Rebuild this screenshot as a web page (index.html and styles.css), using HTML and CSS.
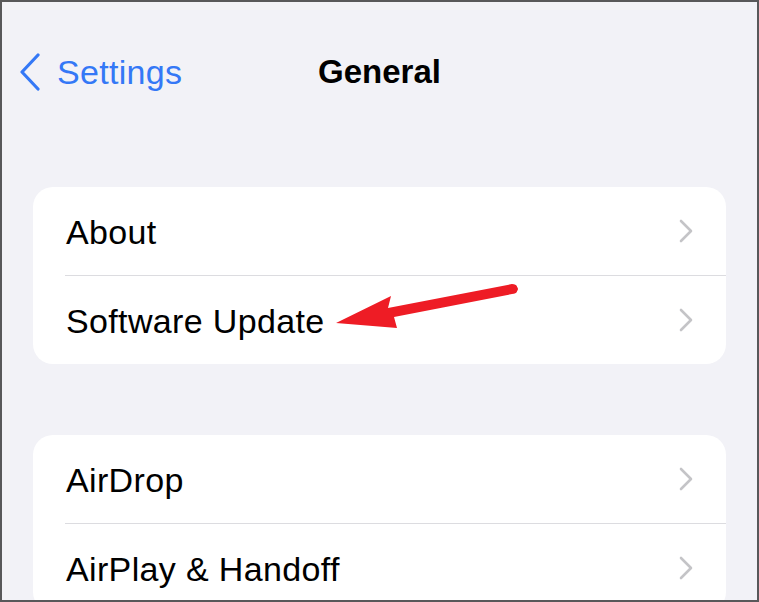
FILE: index.html
```html
<!DOCTYPE html>
<html>
<head>
<meta charset="utf-8">
<title>General</title>
<link rel="stylesheet" href="styles.css">
</head>
<body>
<div class="nav">
	<a class="back" href="#">
		<svg class="backIcon" width="22" height="38" viewBox="0 0 22 38"><polyline points="19,2 3,19 19,36" fill="none" stroke="#3478f6" stroke-width="3.2" stroke-linecap="round" stroke-linejoin="round"/></svg>
		<span>Settings</span>
	</a>
	<div class="title">General</div>
	<div></div>
</div>

<div class="group first">
	<div class="row"><span>About</span><svg class="chev" width="14" height="24" viewBox="0 0 14 24"><polyline points="2,2 12,12 2,22" fill="none" stroke="#c4c4c7" stroke-width="2.6" stroke-linecap="round" stroke-linejoin="round"/></svg></div>
	<div class="sep"></div>
	<div class="row"><span>Software Update</span><svg class="chev" width="14" height="24" viewBox="0 0 14 24"><polyline points="2,2 12,12 2,22" fill="none" stroke="#c4c4c7" stroke-width="2.6" stroke-linecap="round" stroke-linejoin="round"/></svg></div>
</div>

<div class="group">
	<div class="row"><span>AirDrop</span><svg class="chev" width="14" height="24" viewBox="0 0 14 24"><polyline points="2,2 12,12 2,22" fill="none" stroke="#c4c4c7" stroke-width="2.6" stroke-linecap="round" stroke-linejoin="round"/></svg></div>
	<div class="sep"></div>
	<div class="row"><span>AirPlay &amp; Handoff</span><svg class="chev" width="14" height="24" viewBox="0 0 14 24"><polyline points="2,2 12,12 2,22" fill="none" stroke="#c4c4c7" stroke-width="2.6" stroke-linecap="round" stroke-linejoin="round"/></svg></div>
</div>

<!-- annotation arrow drawn over the screenshot -->
<svg class="arrow" width="759" height="602" viewBox="0 0 759 602">
	<polygon points="336,323 391,296 388,308 512,284 516,285 518,289 516,293 512,294 394,317 397,328" fill="#ee1c25"/>
	<circle cx="513" cy="289" r="4.6" fill="#ee1c25"/>
</svg>
</body>
</html>
```

FILE: styles.css
```css
html, body
{
	margin: 0;
	padding: 0;
}
body
{
	width: 759px;
	height: 602px;
	box-sizing: border-box;
	border: 2px solid #58585a;
	background-color: #f2f2f7;
	font-family: "Liberation Sans", Arial, sans-serif;
	overflow: hidden;
	position: relative;
}
.nav
{
	display: grid;
	grid-template-columns: 1fr auto 1fr;
	align-items: center;
	height: 60px;
	margin-top: 40px;
}
.back
{
	display: flex;
	align-items: center;
	padding-left: 17px;
	color: #3478f6;
	font-size: 34px;
	letter-spacing: 0.3px;
	text-decoration: none;
}
.backIcon
{
	margin-right: 16px;
}
.title
{
	font-size: 33px;
	font-weight: bold;
	color: #000;
}
.group
{
	margin: 71px 31px 0 31px;
	background-color: #fff;
	border-radius: 20px;
}
.group.first
{
	margin-top: 85px;
}
.row
{
	display: flex;
	align-items: center;
	justify-content: space-between;
	height: 88px;
	padding: 0 33px 0 33px;
	font-size: 34px;
	letter-spacing: 0.35px;
	color: #000;
}
.row span
{
	padding-top: 3px;
}
.sep
{
	height: 1px;
	margin-left: 32px;
	background-color: #dcdce0;
}
.arrow
{
	position: absolute;
	left: -2px;
	top: -2px;
}
```
